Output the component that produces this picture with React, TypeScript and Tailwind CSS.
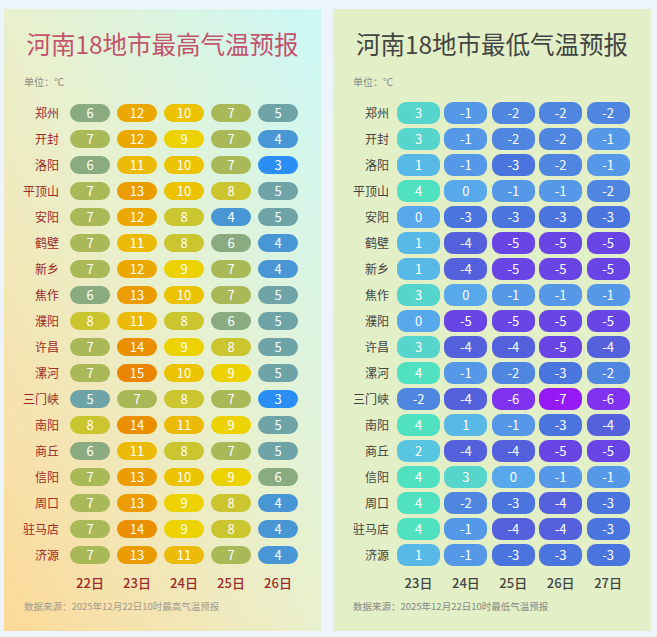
const days = {
    max: ['22日', '23日', '24日', '25日', '26日'],
    min: ['23日', '24日', '25日', '26日', '27日'],
}

const rows: { city: string; max: number[]; min: number[] }[] = [
    { city: '郑州', max: [6, 12, 10, 7, 5], min: [3, -1, -2, -2, -2] },
    { city: '开封', max: [7, 12, 9, 7, 4], min: [3, -1, -2, -2, -1] },
    { city: '洛阳', max: [6, 11, 10, 7, 3], min: [1, -1, -3, -2, -1] },
    { city: '平顶山', max: [7, 13, 10, 8, 5], min: [4, 0, -1, -1, -2] },
    { city: '安阳', max: [7, 12, 8, 4, 5], min: [0, -3, -3, -3, -3] },
    { city: '鹤壁', max: [7, 11, 8, 6, 4], min: [1, -4, -5, -5, -5] },
    { city: '新乡', max: [7, 12, 9, 7, 4], min: [1, -4, -5, -5, -5] },
    { city: '焦作', max: [6, 13, 10, 7, 5], min: [3, 0, -1, -1, -1] },
    { city: '濮阳', max: [8, 11, 8, 6, 5], min: [0, -5, -5, -5, -5] },
    { city: '许昌', max: [7, 14, 9, 8, 5], min: [3, -4, -4, -5, -4] },
    { city: '漯河', max: [7, 15, 10, 9, 5], min: [4, -1, -2, -3, -2] },
    { city: '三门峡', max: [5, 7, 8, 7, 3], min: [-2, -4, -6, -7, -6] },
    { city: '南阳', max: [8, 14, 11, 9, 5], min: [4, 1, -1, -3, -4] },
    { city: '商丘', max: [6, 11, 8, 7, 5], min: [2, -4, -4, -5, -5] },
    { city: '信阳', max: [7, 13, 10, 9, 6], min: [4, 3, 0, -1, -1] },
    { city: '周口', max: [7, 13, 9, 8, 4], min: [4, -2, -3, -4, -3] },
    { city: '驻马店', max: [7, 14, 9, 8, 4], min: [4, -1, -4, -4, -3] },
    { city: '济源', max: [7, 13, 11, 7, 4], min: [1, -1, -3, -3, -3] },
]

const maxColors: Record<number, string> = {
    3: 'bg-[#2b8ef4]',
    4: 'bg-[#4996d5]',
    5: 'bg-[#6ea3a7]',
    6: 'bg-[#8aab7f]',
    7: 'bg-[#a9b958]',
    8: 'bg-[#cbc530]',
    9: 'bg-[#ecd200]',
    10: 'bg-[#ecc300]',
    11: 'bg-[#ecbb0a]',
    12: 'bg-[#eba800]',
    13: 'bg-[#ea9c00]',
    14: 'bg-[#e98f00]',
    15: 'bg-[#e98500]',
}

const minColors: Record<number, string> = {
    4: 'bg-[#50e2c0]',
    3: 'bg-[#56d5cc]',
    2: 'bg-[#58c6e0]',
    1: 'bg-[#58b8e6]',
    0: 'bg-[#58a8ec]',
    [-1]: 'bg-[#5598e8]',
    [-2]: 'bg-[#4e86e0]',
    [-3]: 'bg-[#4a74de]',
    [-4]: 'bg-[#5560dc]',
    [-5]: 'bg-[#6a45e5]',
    [-6]: 'bg-[#7f33ee]',
    [-7]: 'bg-[#9419f5]',
}

const font = { fontFamily: '"Noto Sans CJK SC", "Noto Sans", sans-serif' }

export default function App() {
    return (
        <div className="w-[657px] h-[637px] bg-[#eef4fc] flex gap-[12px] pl-[4px] pt-[9px]" style={font}>
            {/* 最高气温 */}
            <div className="w-[317px] h-[622px] flex flex-col bg-linear-to-tr from-[#fdd998] via-[#e9f0cc] to-[#cbf8f6]">
                <h1 className="pt-[19px] h-[51px] leading-[32px] text-center text-[24.5px] text-[#c2546c]">
                    河南18地市最高气温预报
                </h1>
                <p className="mt-[15px] pl-[20px] h-[14px] leading-[14px] text-[10px] text-[#8c8a80]">单位：℃</p>
                <div className="mt-[11px] flex flex-col">
                    {rows.map((r) => (
                        <div key={r.city} className="h-[26px] flex items-center gap-[11px]">
                            <span className="w-[55px] text-right text-[12px] text-[#9b2a2a]">{r.city}</span>
                            <div className="flex gap-[7px]">
                                {r.max.map((v, i) => (
                                    <span
                                        key={i}
                                        className={`w-[40px] h-[18px] rounded-full flex items-center justify-center text-[13px] text-white ${maxColors[v]}`}
                                    >
                                        {v}
                                    </span>
                                ))}
                            </div>
                        </div>
                    ))}
                </div>
                <div className="mt-[5px] h-[20px] flex items-center gap-[11px]">
                    <span className="w-[55px]" />
                    <div className="flex gap-[7px]">
                        {days.max.map((d) => (
                            <span key={d} className="w-[40px] text-center text-[13px] font-medium text-[#9b2a2a]">{d}</span>
                        ))}
                    </div>
                </div>
                <p className="mt-[6px] pl-[20px] h-[14px] leading-[14px] text-[9.5px] text-[#a59a8e]">
                    数据来源：2025年12月22日10时最高气温预报
                </p>
            </div>

            {/* 最低气温 */}
            <div className="w-[318px] h-[622px] flex flex-col bg-[#e3efc6]">
                <h1 className="pt-[19px] h-[51px] leading-[32px] text-center text-[24.5px] text-[#444444]">
                    河南18地市最低气温预报
                </h1>
                <p className="mt-[15px] pl-[20px] h-[14px] leading-[14px] text-[10px] text-[#888888]">单位：℃</p>
                <div className="mt-[11px] flex flex-col">
                    {rows.map((r) => (
                        <div key={r.city} className="h-[26px] flex items-center gap-[8px]">
                            <span className="w-[56px] text-right text-[12px] text-[#444444]">{r.city}</span>
                            <div className="flex gap-[4.4px]">
                                {r.min.map((v, i) => (
                                    <span
                                        key={i}
                                        className={`w-[43px] h-[22px] rounded-[9px] flex items-center justify-center text-[13px] text-white ${minColors[v]}`}
                                    >
                                        {v}
                                    </span>
                                ))}
                            </div>
                        </div>
                    ))}
                </div>
                <div className="mt-[5px] h-[20px] flex items-center gap-[8px]">
                    <span className="w-[56px]" />
                    <div className="flex gap-[4.4px]">
                        {days.min.map((d) => (
                            <span key={d} className="w-[43px] text-center text-[13px] font-medium text-[#444444]">{d}</span>
                        ))}
                    </div>
                </div>
                <p className="mt-[6px] pl-[20px] h-[14px] leading-[14px] text-[9.5px] text-[#888888]">
                    数据来源：2025年12月22日10时最低气温预报
                </p>
            </div>
        </div>
    )
}
